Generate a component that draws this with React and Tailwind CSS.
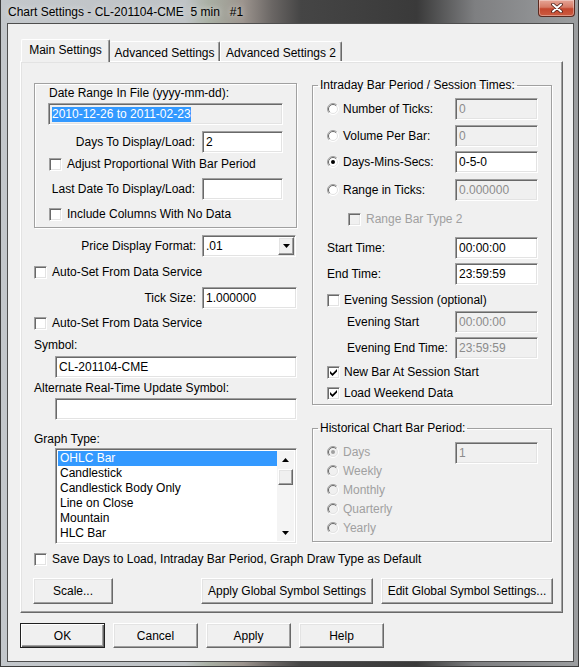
import React from "react"

const font = "font-['Liberation_Sans',Arial,sans-serif]"
const sunken = "border border-[#a0a0a0] border-r-white border-b-white shadow-[inset_1px_1px_0_#696969,inset_-1px_-1px_0_#e3e3e3]"
const raised = "border border-white border-r-[#696969] border-b-[#696969] shadow-[inset_-1px_-1px_0_#a0a0a0,inset_1px_1px_0_#e3e3e3]"
const groupBox = "border border-[#a0a0a0] shadow-[inset_1px_1px_0_#fff,1px_1px_0_#fff]"

function TextBox({ value = "", disabled, className = "" }) {
    return (
        <div className={`h-[22px] flex items-center pl-[3px] whitespace-nowrap ${sunken} ${disabled ? "bg-[#f0f0f0] text-[#8c8c8c]" : "bg-white"} ${className}`}>
            {value}
        </div>
    )
}

function CheckBox({ checked, disabled }) {
    return (
        <span className={`w-[13px] h-[13px] shrink-0 flex items-center justify-center ${sunken} ${disabled ? "bg-[#f0f0f0]" : "bg-white"}`}>
            {checked && (
                <svg width="7" height="7" viewBox="0 0 7 7">
                    <path d="M0 2 L2.5 4.5 L7 0 V2.5 L2.5 7 L0 4.5Z" fill="#000" />
                </svg>
            )}
        </span>
    )
}

function Radio({ checked, disabled }) {
    return (
        <svg width="12" height="12" viewBox="0 0 12 12" className="shrink-0">
            <circle cx="6" cy="6" r="5.5" fill={disabled ? "#f0f0f0" : "#fff"} />
            <path d="M9.9 2.1 A5.5 5.5 0 0 0 2.1 9.9" stroke="#a0a0a0" fill="none" />
            <path d="M2.1 9.9 A5.5 5.5 0 0 0 9.9 2.1" stroke="#fff" fill="none" />
            <path d="M9.2 2.8 A4.5 4.5 0 0 0 2.8 9.2" stroke="#696969" fill="none" />
            <path d="M2.8 9.2 A4.5 4.5 0 0 0 9.2 2.8" stroke="#e3e3e3" fill="none" />
            {checked && <circle cx="6" cy="6" r="2" fill={disabled ? "#a0a0a0" : "#000"} />}
        </svg>
    )
}

function CheckRow({ label, checked, disabled, className = "" }) {
    return (
        <div className={`h-[14px] flex items-center gap-[5px] ${className}`}>
            <CheckBox checked={checked} disabled={disabled} />
            <span className={`whitespace-nowrap ${disabled ? "text-[#a0a0a0]" : ""}`}>{label}</span>
        </div>
    )
}

function Btn({ children, className = "", primary }) {
    return (
        <div className={`flex items-center justify-center bg-[#f0f0f0] whitespace-nowrap ${primary ? "border border-[#202020] shadow-[inset_1px_1px_0_#fff,inset_-1px_-1px_0_#696969,inset_-2px_-2px_0_#a0a0a0]" : raised} ${className}`}>
            {children}
        </div>
    )
}

function DownArrow({ color = "#000" }) {
    return (
        <svg width="7" height="4" viewBox="0 0 7 4"><path d="M0 0h7L3.5 4z" fill={color} /></svg>
    )
}

const graphTypes = ["OHLC Bar", "Candlestick", "Candlestick Body Only", "Line on Close", "Mountain", "HLC Bar"]

function GraphList() {
    return (
        <div className={`mt-[2px] ml-[21px] h-[96px] bg-white flex p-[2px] ${sunken}`}>
            <div className="flex-1 flex flex-col overflow-hidden">
                {graphTypes.map((g, i) => (
                    <div key={g} className={`h-[15px] leading-[15px] pl-[2px] whitespace-nowrap ${i === 0 ? "bg-[#3399ff] text-white" : ""}`}>{g}</div>
                ))}
            </div>
            <div className="w-[17px] bg-[#f4f4f4] flex flex-col">
                <div className="h-[17px] flex items-center justify-center">
                    <svg width="7" height="4" viewBox="0 0 7 4"><path d="M0 4h7L3.5 0z" fill="#000" /></svg>
                </div>
                <div className={`mt-[1px] ml-[1px] w-[15px] h-[16px] bg-[#f0f0f0] ${raised}`} />
                <div className="mt-auto h-[17px] flex items-center justify-center">
                    <DownArrow />
                </div>
            </div>
        </div>
    )
}

function RadioRow({ label, value, checked, disabled }) {
    return (
        <div className="h-[22px] flex items-center">
            <span className="w-[128px] flex items-center gap-[4px]">
                <Radio checked={checked} />
                <span className="whitespace-nowrap">{label}</span>
            </span>
            <TextBox className="w-[83px]" value={value} disabled={disabled} />
        </div>
    )
}

function LeftColumn() {
    return (
        <div className="w-[263px] pt-[21px] flex flex-col">
            <div className={`${groupBox} px-[13px] pb-[6px] flex flex-col`}>
                <div className="mt-[2px] h-[14px] pl-[1px] flex items-center">Date Range In File (yyyy-mm-dd):</div>
                <div className={`mt-[3px] h-[22px] bg-[#f0f0f0] flex items-center pl-[3px] ${sunken}`}>
                    <span className="bg-[#3399ff] text-white leading-[15px]">2010-12-26 to 2011-02-23</span>
                </div>
                <div className="mt-[6px] h-[22px] flex items-center">
                    <span className="w-[147px] text-right whitespace-nowrap">Days To Display/Load:</span>
                    <TextBox className="ml-[7px] flex-1" value="2" />
                </div>
                <CheckRow className="mt-[4px] pl-[1px]" label="Adjust Proportional With Bar Period" />
                <div className="mt-[7px] h-[22px] flex items-center">
                    <span className="w-[147px] text-right whitespace-nowrap">Last Date To Display/Load:</span>
                    <TextBox className="ml-[7px] flex-1" />
                </div>
                <CheckRow className="mt-[7px] pl-[1px]" label="Include Columns With No Data" />
            </div>

            <div className="mt-[7px] h-[22px] flex items-center">
                <span className="w-[162px] text-right whitespace-nowrap">Price Display Format:</span>
                <div className={`ml-[6px] w-[94px] h-[22px] bg-white flex items-center ${sunken}`}>
                    <span className="flex-1 pl-[3px]">.01</span>
                    <span className={`mr-[1px] w-[16px] h-[18px] bg-[#f0f0f0] flex items-center justify-center ${raised}`}>
                        <DownArrow />
                    </span>
                </div>
            </div>
            <CheckRow className="mt-[8px]" label="Auto-Set From Data Service" />
            <div className="mt-[8px] h-[22px] flex items-center">
                <span className="w-[162px] text-right">Tick Size:</span>
                <TextBox className="ml-[6px] w-[95px]" value="1.000000" />
            </div>
            <CheckRow className="mt-[7px]" label="Auto-Set From Data Service" />
            <div className="mt-[8px] h-[14px] flex items-center">Symbol:</div>
            <TextBox className="mt-[4px] ml-[21px]" value="CL-201104-CME" />
            <div className="mt-[3px] h-[14px] flex items-center whitespace-nowrap">Alternate Real-Time Update Symbol:</div>
            <TextBox className="mt-[3px] ml-[21px]" />
            <div className="mt-[12px] h-[14px] flex items-center">Graph Type:</div>
            <GraphList />
        </div>
    )
}

function RightColumn() {
    return (
        <div className="w-[240px] pt-[16px] flex flex-col">
            <fieldset className={groupBox}>
                <legend className="ml-[5px] px-[2px] h-[14px] leading-[14px] whitespace-nowrap">Intraday Bar Period / Session Times:</legend>
                <div className="pl-[14px] pr-[13px] pb-[4px] flex flex-col">
                    <div className="mt-[6px]"><RadioRow label="Number of Ticks:" value="0" disabled /></div>
                    <div className="mt-[5px]"><RadioRow label="Volume Per Bar:" value="0" disabled /></div>
                    <div className="mt-[4px]"><RadioRow label="Days-Mins-Secs:" value="0-5-0" checked /></div>
                    <div className="mt-[6px]"><RadioRow label="Range in Ticks:" value="0.000000" disabled /></div>
                    <CheckRow className="mt-[11px] pl-[21px]" label="Range Bar Type 2" disabled />
                    <div className="mt-[11px] h-[22px] flex items-center">
                        <span className="w-[128px]">Start Time:</span>
                        <TextBox className="w-[83px]" value="00:00:00" />
                    </div>
                    <div className="mt-[4px] h-[22px] flex items-center">
                        <span className="w-[128px]">End Time:</span>
                        <TextBox className="w-[83px]" value="23:59:59" />
                    </div>
                    <div className="mt-[8px] h-[14px] flex items-center gap-[4px]">
                        <CheckBox />
                        <span className="whitespace-nowrap">Evening Session (optional)</span>
                    </div>
                    <div className="mt-[4px] h-[22px] flex items-center">
                        <span className="w-[128px] pl-[20px]">Evening Start</span>
                        <TextBox className="w-[83px]" value="00:00:00" disabled />
                    </div>
                    <div className="mt-[4px] h-[22px] flex items-center">
                        <span className="w-[128px] pl-[20px] whitespace-nowrap">Evening End Time:</span>
                        <TextBox className="w-[83px]" value="23:59:59" disabled />
                    </div>
                    <div className="mt-[6px] h-[14px] flex items-center gap-[4px]">
                        <CheckBox checked />
                        <span>New Bar At Session Start</span>
                    </div>
                    <div className="mt-[7px] h-[14px] flex items-center gap-[4px]">
                        <CheckBox checked />
                        <span>Load Weekend Data</span>
                    </div>
                </div>
            </fieldset>

            <fieldset className={`mt-[16px] ${groupBox}`}>
                <legend className="ml-[5px] px-[2px] h-[14px] leading-[14px] whitespace-nowrap">Historical Chart Bar Period:</legend>
                <div className="pl-[14px] pr-[13px] pb-[4px] flex flex-col">
                    <div className="mt-[7px] h-[19px] flex items-start">
                        <span className="w-[128px] h-[19px] flex items-center gap-[4px] text-[#a0a0a0]">
                            <Radio checked disabled />
                            <span>Days</span>
                        </span>
                        <TextBox className="w-[83px]" value="1" disabled />
                    </div>
                    {["Weekly", "Monthly", "Quarterly", "Yearly"].map((p) => (
                        <div key={p} className="h-[19px] flex items-center gap-[4px] text-[#a0a0a0]">
                            <Radio disabled />
                            <span>{p}</span>
                        </div>
                    ))}
                </div>
            </fieldset>
        </div>
    )
}

export default function App() {
    return (
        <div className={`w-[579px] h-[667px] overflow-hidden flex flex-col pl-[7px] pr-[5px] pb-[5px] bg-[linear-gradient(90deg,#c3c7cb_0%,#bfc3c6_32%,#a9b0a4_36%,#9c948e_42%,#6a6664_47%,#454545_52%,#3a3a3a_72%,#7e7f81_82%,#9c9ea0_100%)] shadow-[inset_1px_0_0_#3c3c3c,inset_-1px_0_0_#3c3c3c,inset_0_-1px_0_#3c3c3c] ${font} text-[12px] leading-[14px] text-black`}>
            {/* title bar */}
            <div className="h-[23px] flex items-center">
                <span className="ml-[1px] whitespace-pre [text-shadow:0_0_6px_rgba(255,255,255,0.8)]">Chart Settings - CL-201104-CME  5 min   #1</span>
                <div className="ml-auto -mr-[1px] self-start w-[37px] h-[17px] rounded-b-[4px] border border-t-0 border-[#5b2a20] bg-[linear-gradient(180deg,#e6a596_0%,#d67b66_45%,#c4472e_55%,#cc5b40_100%)] shadow-[inset_0_0_0_1px_rgba(255,255,255,0.35)] flex items-center justify-center">
                    <svg width="12" height="10" viewBox="0 0 12 10">
                        <path d="M2 1.5l8 7M10 1.5l-8 7" stroke="#4a1c14" strokeWidth="3.6" strokeLinecap="round" />
                        <path d="M2 1.5l8 7M10 1.5l-8 7" stroke="#fff" strokeWidth="2" strokeLinecap="round" />
                    </svg>
                </div>
            </div>

            {/* client area */}
            <div className="flex-1 border border-[#4e4e4e] bg-[#f0f0f0] flex flex-col">
                <div className="mt-[15px] ml-[13px] h-[22px] flex items-end relative z-10">
                    <div className="w-[89px] h-[23px] -mb-px bg-[#f0f0f0] border-t border-l border-white border-r border-r-[#696969] shadow-[inset_-1px_0_0_#a0a0a0] rounded-t-[2px] flex justify-center pt-[3px]">Main Settings</div>
                    <div className="w-[110px] h-[20px] bg-[#f0f0f0] border-t border-white border-r border-r-[#696969] shadow-[inset_-1px_0_0_#a0a0a0] rounded-t-[2px] flex justify-center pt-[4px] whitespace-nowrap">Advanced Settings</div>
                    <div className="w-[122px] h-[20px] bg-[#f0f0f0] border-t border-l border-white border-r border-r-[#696969] shadow-[inset_-1px_0_0_#a0a0a0] rounded-t-[2px] flex justify-center pt-[4px] whitespace-nowrap">Advanced Settings 2</div>
                </div>

                <div className={`ml-[12px] w-[543px] h-[552px] flex flex-col ${raised}`}>
                    <div className="pl-[13px] flex gap-[15px]">
                        <LeftColumn />
                        <RightColumn />
                    </div>
                    <CheckRow className="mt-[8px] ml-[13px]" label="Save Days to Load, Intraday Bar Period, Graph Draw Type as Default" />
                    <div className="mt-[12px] ml-[12px] h-[26px] flex">
                        <Btn className="w-[80px]">Scale...</Btn>
                        <Btn className="ml-[88px] w-[172px]">Apply Global Symbol Settings</Btn>
                        <Btn className="ml-[8px] w-[172px]">Edit Global Symbol Settings...</Btn>
                    </div>
                </div>

                <div className="mt-[10px] ml-[12px] h-[25px] flex gap-[8px]">
                    <Btn primary className="w-[85px]">OK</Btn>
                    <Btn className="w-[85px]">Cancel</Btn>
                    <Btn className="w-[85px]">Apply</Btn>
                    <Btn className="w-[85px]">Help</Btn>
                </div>
            </div>
        </div>
    )
}
